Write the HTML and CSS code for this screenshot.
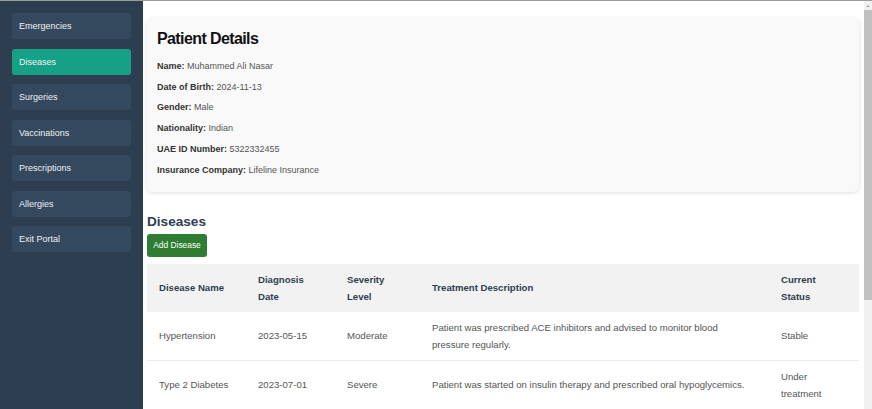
FILE: index.html
```html
<!DOCTYPE html>
<html lang="en">
<head>
<meta charset="utf-8">
<title>Patient Portal - Diseases</title>
<link rel="stylesheet" href="styles.css">
</head>
<body>
<aside class="sidebar">
  <nav class="nav">
    <a class="nav-item" href="#">Emergencies</a>
    <a class="nav-item active" href="#">Diseases</a>
    <a class="nav-item" href="#">Surgeries</a>
    <a class="nav-item" href="#">Vaccinations</a>
    <a class="nav-item" href="#">Prescriptions</a>
    <a class="nav-item" href="#">Allergies</a>
    <a class="nav-item" href="#">Exit Portal</a>
  </nav>
</aside>
<main class="main">
  <section class="card">
    <h2 class="card-title">Patient Details</h2>
    <div class="detail"><span class="label">Name:</span> Muhammed Ali Nasar</div>
    <div class="detail"><span class="label">Date of Birth:</span> 2024-11-13</div>
    <div class="detail"><span class="label">Gender:</span> Male</div>
    <div class="detail"><span class="label">Nationality:</span> Indian</div>
    <div class="detail"><span class="label">UAE ID Number:</span> 5322332455</div>
    <div class="detail"><span class="label">Insurance Company:</span> Lifeline Insurance</div>
  </section>
  <section class="records">
    <h3 class="section-title">Diseases</h3>
    <button class="btn-add" type="button">Add Disease</button>
    <table class="table">
      <colgroup>
        <col class="c1"><col class="c2"><col class="c3"><col class="c4"><col class="c5">
      </colgroup>
      <thead>
        <tr>
          <th>Disease Name</th>
          <th>Diagnosis Date</th>
          <th>Severity Level</th>
          <th>Treatment Description</th>
          <th>Current Status</th>
        </tr>
      </thead>
      <tbody>
        <tr>
          <td>Hypertension</td>
          <td>2023-05-15</td>
          <td>Moderate</td>
          <td>Patient was prescribed ACE inhibitors and advised to monitor blood pressure regularly.</td>
          <td>Stable</td>
        </tr>
        <tr>
          <td>Type 2 Diabetes</td>
          <td>2023-07-01</td>
          <td>Severe</td>
          <td>Patient was started on insulin therapy and prescribed oral hypoglycemics.</td>
          <td>Under treatment</td>
        </tr>
      </tbody>
    </table>
  </section>
</main>
<div class="scrollbar" aria-hidden="true">
  <div class="sb-btn"><span class="sb-arrow"></span></div>
  <div class="sb-thumb"></div>
</div>
</body>
</html>
```
FILE: styles.css
```css
* { box-sizing: border-box; }

html, body { height: 100%; }

body {
  margin: 0;
  border-top: 1px solid #9c9c9c;
  display: flex;
  overflow: hidden;
  font-family: "Liberation Sans", Arial, sans-serif;
  background: #ffffff;
  color: #555555;
}

.sidebar {
  width: 143px;
  flex: 0 0 143px;
  background: #2c3e50;
  padding: 12px 12px 0 12px;
}

.nav {
  display: flex;
  flex-direction: column;
  gap: 9.5px;
}

.nav-item {
  display: flex;
  align-items: center;
  height: 26px;
  padding: 0 7px;
  background: #34495e;
  border-radius: 3px;
  color: #eef2f4;
  font-size: 9px;
  text-decoration: none;
}

.nav-item.active { background: #16a085; }

.main {
  flex: 1;
  min-width: 0;
  overflow: hidden;
  padding: 17px 5px 0 4px;
}

.scrollbar {
  flex: 0 0 8px;
  width: 8px;
  background: #f1f1f1;
  display: flex;
  flex-direction: column;
}

.sb-btn {
  height: 9px;
  display: flex;
  align-items: center;
  justify-content: center;
}

.sb-arrow {
  width: 0;
  height: 0;
  border-left: 2px solid transparent;
  border-right: 2px solid transparent;
  border-bottom: 2px solid #a3a3a3;
}

.sb-thumb {
  height: 290px;
  background: #c1c1c1;
}

.card {
  background: #f9f9f9;
  border-radius: 5px;
  box-shadow: 0 1px 4px rgba(0, 0, 0, 0.13);
  padding: 10.5px 10px 11px 10px;
}

.card-title {
  margin: 0 0 7.4px 0;
  font-size: 16px;
  line-height: 20px;
  letter-spacing: -0.6px;
  font-weight: bold;
  color: #111111;
}

.detail {
  font-size: 9px;
  line-height: 20.8px;
  color: #555555;
}

.label {
  font-weight: bold;
  color: #333333;
}

.records { margin-top: 22px; }

.section-title {
  margin: 0 0 4px 0;
  font-size: 13.6px;
  line-height: 16px;
  font-weight: bold;
  color: #2c3e50;
}

.btn-add {
  display: block;
  height: 23px;
  width: 60px;
  padding: 0;
  border: none;
  border-radius: 3px;
  background: #2e7d32;
  color: #ffffff;
  font-family: "Liberation Sans", Arial, sans-serif;
  font-size: 8.4px;
  margin-bottom: 7px;
}

.table {
  width: 100%;
  border-collapse: collapse;
  table-layout: fixed;
  font-size: 9.6px;
}

.c1 { width: 99px; }
.c2 { width: 89px; }
.c3 { width: 85px; }
.c4 { width: 349px; }
.c5 { width: 90px; }

.table th,
.table td {
  text-align: left;
  vertical-align: middle;
  padding: 7px 12px;
  line-height: 17px;
}

.table th {
  background: #f2f2f2;
  color: #2f3e4e;
  font-weight: bold;
}

.table td {
  color: #555555;
  border-bottom: 1px solid #ececec;
}
```
